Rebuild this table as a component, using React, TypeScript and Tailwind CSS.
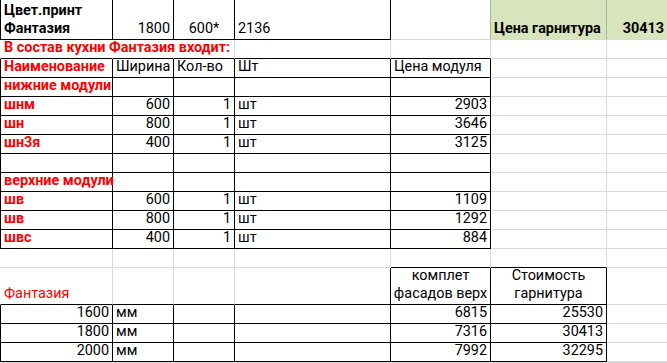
import React from 'react';
import clsx from 'clsx';

// border codes: K black, G gridline, N none, O olive (green cell)
type B = 'K' | 'G' | 'N' | 'O';

const rightCls: Record<B, string> = {
  K: 'border-r-black',
  G: 'border-r-[#dadada]',
  N: 'border-r-transparent',
  O: 'border-r-[#a9b896]',
};
const bottomCls: Record<B, string> = {
  K: 'border-b-black',
  G: 'border-b-[#dadada]',
  N: 'border-b-transparent',
  O: 'border-b-[#a9b896]',
};
const leftCls: Record<B, string> = {
  K: 'border-l-black',
  G: 'border-l-[#dadada]',
  N: 'border-l-transparent',
  O: 'border-l-[#a9b896]',
};

type Cell = {
  t?: React.ReactNode;
  a?: 'l' | 'r' | 'c';
  red?: boolean;
  bold?: boolean;
  green?: boolean;
  r: B;
  b: B;
  l?: B;
};

const grid = (row: B[], bottom: B[], left: B): Cell[] =>
  row.map((r, i) => ({ r, b: bottom[i], l: i === 0 ? left : undefined }));

const boxed = (bottom: B = 'K'): Cell[] =>
  grid(['K', 'K', 'K', 'K', 'K', 'G', 'G'], [bottom, bottom, bottom, bottom, bottom, 'G', 'G'], 'K');

const fill = (cells: Cell[], content: Partial<Cell>[]) =>
  cells.map((c, i) => ({ ...c, ...(content[i] || {}) }));

const moduleRow = (name: string, w: string, price: string) =>
  fill(boxed(), [
    { t: name, red: true, bold: true },
    { t: w, a: 'r' },
    { t: '1', a: 'r' },
    { t: 'шт' },
    { t: price, a: 'r' },
  ]);

const sizeRow = (w: string, facades: string, total: string) =>
  fill(grid(['K', 'K', 'K', 'K', 'K', 'K', 'G'], ['K', 'K', 'K', 'K', 'K', 'K', 'G'], 'K'), [
    { t: w, a: 'r' },
    { t: 'мм' },
    {},
    {},
    { t: facades, a: 'r' },
    { t: total, a: 'r' },
  ]);

const rows: Cell[][] = [
  fill(grid(['K', 'K', 'K', 'K', 'O', 'O', 'G'], ['K', 'K', 'K', 'K', 'G', 'G', 'G'], 'K'), [
    { t: <>Цвет.принт<br />Фантазия</>, bold: true },
    { t: '1800', a: 'r' },
    { t: '600*', a: 'c' },
    { t: '2136' },
    {},
    { t: 'Цена гарнитура', bold: true, green: true },
    { t: '30413', bold: true, a: 'r', green: true },
  ]),
  fill(grid(['N', 'N', 'G', 'G', 'G', 'G', 'G'], ['K', 'K', 'K', 'K', 'K', 'G', 'G'], 'N'), [
    { t: 'В состав кухни Фантазия входит:', red: true, bold: true },
  ]),
  fill(boxed(), [
    { t: 'Наименование', red: true, bold: true },
    { t: 'Ширина' },
    { t: 'Кол-во' },
    { t: 'Шт' },
    { t: 'Цена модуля' },
  ]),
  fill(boxed(), [{ t: 'нижние модули', red: true, bold: true }]),
  moduleRow('шнм', '600', '2903'),
  moduleRow('шн', '800', '3646'),
  moduleRow('шн3я', '400', '3125'),
  boxed(),
  fill(boxed(), [{ t: 'верхние модули', red: true, bold: true }]),
  moduleRow('шв', '600', '1109'),
  moduleRow('шв', '800', '1292'),
  moduleRow('швс', '400', '884'),
  grid(['G', 'G', 'G', 'G', 'G', 'G', 'G'], ['G', 'G', 'G', 'G', 'K', 'K', 'G'], 'N'),
  fill(grid(['G', 'G', 'G', 'K', 'K', 'K', 'G'], ['K', 'K', 'K', 'K', 'K', 'K', 'G'], 'N'), [
    { t: 'Фантазия', red: true },
    {},
    {},
    {},
    { t: <>комплет<br />фасадов верх</>, a: 'c' },
    { t: <>Стоимость<br />гарнитура</>, a: 'c' },
  ]),
  sizeRow('1600', '6815', '25530'),
  sizeRow('1800', '7316', '30413'),
  sizeRow('2000', '7992', '32295'),
];

export default function App() {
  return (
    <div className="w-[667px] h-[363px] overflow-hidden bg-white font-['Roboto',sans-serif] text-[14.4px] leading-[18px] text-black">
      <div className="grid grid-cols-[113px_61px_61px_156px_100px_116px_61px] grid-rows-[40px_repeat(12,19px)_37px_repeat(3,19px)] border-b border-b-[#dadada]">
        {rows.map((row, ri) =>
          row.map((c, ci) => (
            <div
              key={`${ri}-${ci}`}
              className={clsx(
                'flex items-end whitespace-nowrap px-[3px] pb-px border-r border-b',
                rightCls[c.r],
                bottomCls[c.b],
                ci === 0 && 'border-l',
                ci === 0 && c.l && leftCls[c.l],
                c.a === 'r' && 'justify-end text-right',
                c.a === 'c' && 'justify-center text-center',
                c.red && 'text-[#ff0000]',
                c.bold && 'font-bold',
                c.green && 'bg-[#d8e4bc]'
              )}
            >
              {c.t !== undefined && <span className="relative z-10">{c.t}</span>}
            </div>
          ))
        )}
      </div>
    </div>
  );
}
